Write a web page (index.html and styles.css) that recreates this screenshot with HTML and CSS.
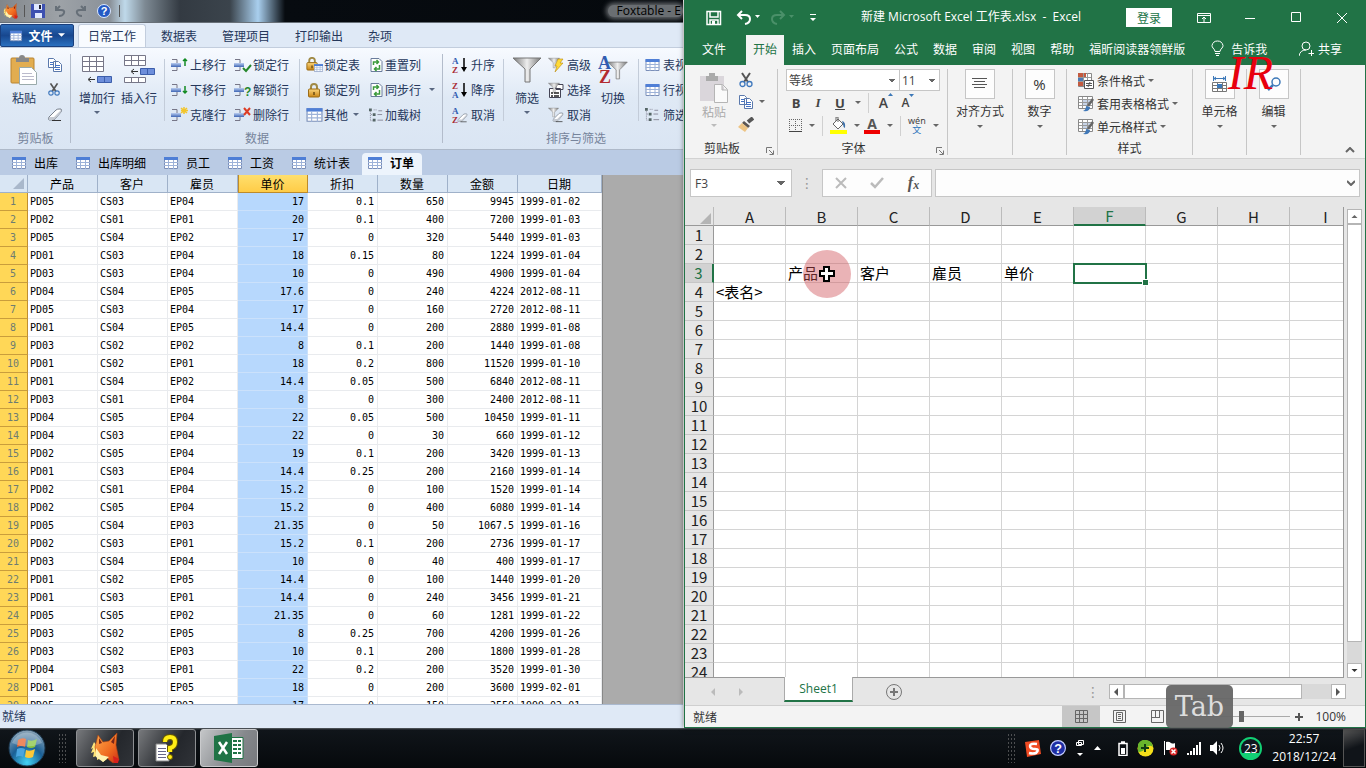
FILE: index.html
```html
<!DOCTYPE html>
<html lang="zh-CN">
<head>
<meta charset="utf-8">
<title>Foxtable 与 Excel</title>
<link rel="stylesheet" href="styles.css">
</head>
<body>
<svg class="defs" aria-hidden="true">
  <defs>
    <linearGradient id="blueBar" x1="0" y1="0" x2="0" y2="1"><stop offset="0" stop-color="#b9cdf0"/><stop offset="1" stop-color="#3f66b5"/></linearGradient>
    <linearGradient id="silver" x1="0" y1="0" x2="1" y2="0"><stop offset="0" stop-color="#777"/><stop offset=".5" stop-color="#eee"/><stop offset="1" stop-color="#777"/></linearGradient>
    <linearGradient id="gold" x1="0" y1="0" x2="0" y2="1"><stop offset="0" stop-color="#fbd57c"/><stop offset="1" stop-color="#c98413"/></linearGradient>
    <linearGradient id="foxFill" x1="0" y1="0" x2="1" y2="1"><stop offset="0" stop-color="#ffae4d"/><stop offset=".6" stop-color="#ef6a20"/><stop offset="1" stop-color="#c92d14"/></linearGradient>
    <radialGradient id="orb" cx=".5" cy=".9" r=".9"><stop offset="0" stop-color="#43d3f5"/><stop offset=".5" stop-color="#1a5f95"/><stop offset="1" stop-color="#8fa6b8"/></radialGradient>
  </defs>
  <symbol id="table" viewBox="0 0 14 14"><path fill="#fff" stroke="#7b8fb8" d="M.5 1.500h13v11H.5z"/><path fill="#4f7fd6" d="M0 1h14v3H0z"/><path stroke="#9db2d8" d="M0 6.500h14M0 9.500h14M4.500 4v9M9.500 4v9"/></symbol>
  <symbol id="row" viewBox="0 0 18 16"><path fill="none" stroke="#778" d="M1 2.500h5V6M1 13.500h5V10"/><path fill="url(#blueBar)" d="M0 6h10v4H0z"/></symbol>
  <symbol id="az" viewBox="0 0 16 16"><text x="0" y="7" class="az-a">A</text><text x="0" y="16" class="az-z">Z</text></symbol>
  <symbol id="za" viewBox="0 0 16 16"><text x="0" y="7" class="az-z">Z</text><text x="0" y="16" class="az-a">A</text></symbol>
  <symbol id="down" viewBox="0 0 6 16"><path stroke="#000" stroke-width="1.500" d="M3 1v12"/><path d="M0 10h6l-3 5z"/></symbol>
  <symbol id="funnel" viewBox="0 0 30 26"><path fill="url(#silver)" stroke="#777" d="M1 1h28L18 12v13h-5V12z"/></symbol>
  <symbol id="eraser" viewBox="0 0 16 14"><path fill="#fff" stroke="#77808c" d="M2 9l7-7q1-1 3-1h2q1 1 0 3l-6 7q-1 1-3 1H2q-1-1 0-3z"/><path fill="#c5cad2" d="M2 9h5l7-7v2l-6 7-3 1H2z"/><path stroke="#333" d="M5 12.500h9"/></symbol>
  <symbol id="lock" viewBox="0 0 16 16"><path fill="none" stroke="#a08a45" stroke-width="2" d="M4.500 8V5q0-3 3-3t3 3v3"/><rect x="2" y="7" width="11" height="8" rx="1" fill="url(#gold)" stroke="#9b6c17"/><path stroke="#6b4b12" stroke-width="1.500" d="M7.500 10v3"/></symbol>
  <symbol id="refresh" viewBox="0 0 14 16"><path fill="#fff" stroke="#6a7c9c" d="M1.500 1.500h8l3 3v10h-11z"/><path fill="none" stroke="#3b9a3b" stroke-width="1.500" d="M4 8V5h4M10 8v4H6M7 3l2 2-2 2M7 10l-2 2 2 2"/></symbol>
  <symbol id="tree" viewBox="0 0 16 16"><path fill="#566" d="M0 1h3v3H0zM4 6h3v3H4zM4 12h3v3H4z"/><path fill="none" stroke="#889" stroke-dasharray="1 1" d="M1.500 4v10H4M2 7.500h2M5 2.500h4"/><path stroke="#889" d="M10 3.500h4M9 7.500h5M9 13.500h6"/></symbol>
  <symbol id="scissors" viewBox="0 0 16 16"><path stroke="#555" stroke-width="2" d="M4 1l6 9M12 1L6 10"/><circle cx="4.500" cy="12" r="2.500" fill="none" stroke="#3f78bd" stroke-width="1.300"/><circle cx="11.500" cy="12" r="2.500" fill="none" stroke="#3f78bd" stroke-width="1.300"/></symbol>
  <symbol id="copy" viewBox="0 0 16 14"><path fill="#fff" stroke="#5b79ac" d="M1.500.5h5l2 2v7h-7zM6.500 3.500h5l3 3v7h-8z"/><path stroke="#4472c4" d="M3 4.500h3M3 6.500h3M8 7.500h5M8 9.500h5M8 11.500h5"/></symbol>
  <symbol id="caret" viewBox="0 0 6 4"><path fill="currentColor" d="M0 0h6L3 3z"/></symbol>
  <symbol id="launch" viewBox="0 0 8 8"><path fill="none" stroke="#777" d="M.5 6V.5H6M3 3l4 4M7.500 3.500v4h-4"/></symbol>
  <symbol id="fox" viewBox="0 0 30 32"><path fill="#ffe67a" d="M4 10L1 17l2-1-2 5 3-1-1 5 4-1v4l4-2 2 4 4-3z"/><path fill="url(#foxFill)" stroke="#a93f13" stroke-width=".6" d="M8 3l5 7 6-1L27 1l-1 12 3 15-6 3q-4-3-6-5l-5 2-5-5-2-8z"/><path fill="#fff2b0" d="M6 16l5 7 8 2-6 5-7-5z"/><path fill="#7b2718" d="M9 6l3 5-3 1zM25 4l-4 6 3 2z"/><path fill="#d81f1c" d="M23 24l6 3-1 4h-4z"/></symbol>
  <symbol id="cellstyle" viewBox="0 0 16 16"><path fill="#fff" stroke="#888" d="M.5.5h14v12H.5z"/><path fill="#c7d4e8" d="M4 4h8v6H4z"/><path stroke="#999" d="M1 3.500h13M1 6.500h13M1 9.500h13M4.500 1v11M9.500 1v11"/><path stroke="#666" stroke-width="2.500" d="M15 3l-5 7"/><path fill="#4078b8" d="M5 15q3-1 3-5l4 1q0 5-7 4z"/></symbol>
</svg>

<div class="desktop">
<main class="windows">
  <section class="fox" aria-label="Foxtable">
    <header class="fox-title">
      <svg width="15" height="16"><use href="#fox"/></svg><i class="tick"></i>
      <svg width="14" height="14" viewBox="0 0 14 14"><path fill="#3d50b0" d="M0 0h14v14H0z"/><path fill="#dfe8ff" d="M3 0h8v6H3zM4 9h7v5H4z"/><path fill="#223" d="M8 1h2v4H8z"/></svg>
      <svg class="dim" width="12" height="12" viewBox="0 0 12 12"><path fill="none" stroke="#666f78" stroke-width="2" d="M2 1v4h5q4 0 3 3t-5 3M2 5l4-4"/></svg>
      <svg class="dim" width="12" height="12" viewBox="0 0 12 12"><path fill="none" stroke="#666f78" stroke-width="2" d="M10 1v4H5q-4 0-3 3t5 3M10 5L6 1"/></svg>
      <svg class="help" width="14" height="14" viewBox="0 0 14 14"><circle cx="7" cy="7" r="6.500" fill="#2459c4" stroke="#dce8ff"/><text x="7" y="11" text-anchor="middle" class="q">?</text></svg><i class="tick last"></i>
      <span class="fox-name">Foxtable - E</span>
    </header>
    <nav class="fox-tabs">
      <button class="file"><svg width="14" height="12"><use href="#table"/></svg>文件<svg width="7" height="5"><use href="#caret"/></svg></button>
      <button class="active">日常工作</button><button>数据表</button><button>管理项目</button><button>打印输出</button><button>杂项</button>
    </nav>
    <div class="fox-ribbon">
      <div class="fgroup g-clip">
        <div class="fbody">
          <button class="big"><svg width="28" height="30" viewBox="0 0 28 30"><rect x="1" y="3" width="23" height="25" rx="1" fill="#e2ad50" stroke="#b98431"/><path fill="#888" d="M6 3h3q0-3 3-3t3 3h4v4H6z"/><path fill="#fff" stroke="#9aa" d="M9.500 12.500h12l5 5v12h-17z"/><path stroke="#bbc" d="M12 18.500h10M12 21.500h12M12 24.500h12"/></svg>粘贴</button>
          <div class="stack icons"><button aria-label="复制"><svg width="16" height="14"><use href="#copy"/></svg></button><button aria-label="剪切"><svg width="14" height="15"><use href="#scissors"/></svg></button><button aria-label="清除"><svg width="16" height="14"><use href="#eraser"/></svg></button></div>
        </div>
        <div class="flabel">剪贴板</div>
      </div>
      <div class="fgroup g-data">
        <div class="fbody">
          <button class="big"><svg width="32" height="30" viewBox="0 0 32 30"><path fill="#fff" stroke="#778" d="M1.500 1.500h21v15h-21zM1 6.500h21M1 11.500h21M8.500 1v15M15.500 1v15"/><path fill="#6d8edb" stroke="#3c5eab" d="M16.500 21.500h14v6h-14zM23.500 21v7"/><path fill="none" stroke="#333" d="M14 24.500H8M10 22l-3 2.500 3 2.500"/></svg>增加行<svg width="6" height="4"><use href="#caret"/></svg></button>
          <button class="big"><svg width="32" height="30" viewBox="0 0 32 30"><path fill="#fff" stroke="#778" d="M1.500.5h21v10h-21zM1 5.500h21M8.500 0v10M15.500 0v10M1.500 22.500h21v5h-21zM8.500 22v6M15.500 22v6"/><path fill="#6d8edb" stroke="#3c5eab" d="M17.500 13.500h14v6h-14zM24.500 13v7"/><path fill="none" stroke="#333" d="M15 16.500H9M11 14l-3 2.500 3 2.500"/></svg>插入行</button>
          <i class="sep"></i>
          <div class="stack">
            <button><svg width="18" height="16" viewBox="0 0 18 16"><use href="#row" width="18" height="16"/><path fill="none" stroke="#128b22" stroke-width="1.500" d="M14 9V2M12 4l2-2 2 2"/></svg>上移行</button>
            <button><svg width="18" height="16" viewBox="0 0 18 16"><use href="#row" width="18" height="16"/><path fill="none" stroke="#128b22" stroke-width="1.500" d="M14 4v7M12 9l2 2 2-2"/></svg>下移行</button>
            <button><svg width="18" height="16" viewBox="0 0 18 16"><use href="#row" width="18" height="16"/><path stroke="#f2c52b" stroke-width="1.500" d="M13 0v7M10 3.500h7M10 1l6 5M16 1l-6 5"/></svg>克隆行</button>
          </div>
          <div class="stack">
            <button><svg width="18" height="16" viewBox="0 0 18 16"><use href="#row" width="18" height="16"/><path fill="none" stroke="#25872c" stroke-width="2" d="M9 11l3 3 5-6"/></svg>锁定行</button>
            <button><svg width="18" height="16" viewBox="0 0 18 16"><use href="#row" width="18" height="16"/><text x="10" y="14" class="unlock">?</text></svg>解锁行</button>
            <button><svg width="18" height="16" viewBox="0 0 18 16"><use href="#row" width="18" height="16"/><path stroke="#dc3b23" stroke-width="2" d="M10 1l6 7M16 1l-6 7"/></svg>删除行</button>
          </div>
          <i class="sep"></i>
          <div class="stack">
            <button><svg width="17" height="16" viewBox="0 0 17 16"><use href="#lock" x="-1" y="-1" width="15" height="15"/><use href="#table" x="8" y="6" width="9" height="10"/></svg>锁定表</button>
            <button><svg width="17" height="16"><use href="#lock"/></svg>锁定列</button>
            <button><svg width="17" height="16"><use href="#table"/></svg>其他<svg class="near" width="6" height="4"><use href="#caret"/></svg></button>
          </div>
          <div class="stack">
            <button><svg width="15" height="16"><use href="#refresh"/></svg>重置列</button>
            <button><svg width="15" height="16"><use href="#refresh"/></svg>同步行<svg class="far" width="6" height="4"><use href="#caret"/></svg></button>
            <button><svg width="15" height="16"><use href="#tree"/></svg>加载树</button>
          </div>
        </div>
        <div class="flabel">数据</div>
      </div>
      <div class="fgroup g-sort">
        <div class="fbody">
          <div class="stack s1">
            <button><svg width="16" height="16"><use href="#az" width="16" height="16"/><use href="#down" x="9" width="6" height="16"/></svg>升序</button>
            <button><svg width="16" height="16"><use href="#za" width="16" height="16"/><use href="#down" x="9" width="6" height="16"/></svg>降序</button>
            <button><svg width="16" height="16"><use href="#az" width="16" height="16"/><use href="#eraser" x="5" y="6" width="11" height="10"/></svg>取消</button>
          </div>
          <i class="sep"></i>
          <button class="big"><svg width="30" height="30"><use href="#funnel"/></svg>筛选<svg width="6" height="4"><use href="#caret"/></svg></button>
          <div class="stack s2">
            <button><svg width="16" height="16"><use href="#funnel" width="12" height="12"/><path fill="#ffda38" stroke="#b98a10" stroke-width=".6" d="M10 2h5l-3 4h3l-8 9 2-6H7z"/></svg>高级</button>
            <button><svg width="16" height="16"><path fill="#fff" stroke="#445" d="M1.500 6.500h11v9h-11zM8 2.500h7v5H8z"/><use href="#funnel" width="12" height="12"/><path stroke="#222" stroke-width="1.500" d="M3 11h2M6 11h5M3 14h2M6 14h5"/></svg>选择</button>
            <button><svg width="16" height="16"><use href="#funnel" width="11" height="11"/><use href="#eraser" x="4" y="5" width="12" height="11"/></svg>取消</button>
          </div>
          <button class="big"><svg width="30" height="30"><use href="#funnel" x="9" y="4" width="21" height="23"/><text x="0" y="14" class="big-a">A</text><text x="1" y="28" class="big-z">Z</text></svg>切换</button>
          <i class="sep"></i>
          <div class="stack s2">
            <button><svg width="15" height="14"><use href="#table"/></svg>表视图</button>
            <button><svg width="15" height="14"><use href="#table"/></svg>行视图</button>
            <button><svg width="15" height="15"><use href="#tree"/></svg>筛选树</button>
          </div>
        </div>
        <div class="flabel">排序与筛选</div>
      </div>
    </div>
    <nav class="sheet-bar">
      <button><svg width="14" height="14"><use href="#table"/></svg>出库</button>
      <button><svg width="14" height="14"><use href="#table"/></svg>出库明细</button>
      <button><svg width="14" height="14"><use href="#table"/></svg>员工</button>
      <button><svg width="14" height="14"><use href="#table"/></svg>工资</button>
      <button><svg width="14" height="14"><use href="#table"/></svg>统计表</button>
      <button class="active"><svg width="14" height="14"><use href="#table"/></svg>订单</button>
    </nav>
    <div class="fox-data">
      <table class="orders">
        <thead><tr><th class="corner"><svg width="11" height="11" viewBox="0 0 11 11"><path fill="#a9b8cb" d="M11 0v11H0z"/></svg></th><th>产品</th><th>客户</th><th>雇员</th><th class="picked">单价</th><th>折扣</th><th>数量</th><th>金额</th><th class="date">日期</th></tr></thead>
        <tbody id="orders"></tbody>
      </table>
    </div>
    <footer class="fox-status">就绪</footer>
  </section>

  <section class="excel" aria-label="Excel">
    <header class="x-title">
      <button class="q-save" aria-label="保存"><svg width="16" height="16" viewBox="0 0 16 16"><path fill="none" stroke="#fff" stroke-width="1.500" d="M1 1.500h13.500v13H1zM4 2v5h8V2M4 14v-4h8v4"/><path fill="#fff" d="M6 11h3v3H6z"/></svg></button>
      <button class="q-undo" aria-label="撤消"><svg width="25" height="15" viewBox="0 0 25 15"><path fill="none" stroke="#fff" stroke-width="2" d="M6 1L2 5l4 4M2 5h7q5 0 5 4t-5 5"/><path fill="#fff" d="M19 5h5l-2.500 3z"/></svg></button>
      <button class="q-redo" aria-label="恢复"><svg width="25" height="15" viewBox="0 0 25 15"><path fill="none" stroke="#4a9069" stroke-width="2" d="M10 1l4 4-4 4M14 5H7q-5 0-5 4t5 5"/><path fill="#4a9069" d="M19 5h5l-2.500 3z"/></svg></button>
      <button aria-label="自定义"><svg width="6" height="8" viewBox="0 0 6 8"><path fill="#fff" d="M0 0h6v1H0zM0 4h6L3 7z"/></svg></button>
      <h1>新建 Microsoft Excel 工作表.xlsx&nbsp; - &nbsp;Excel</h1>
      <button class="login">登录</button>
      <div class="win-buttons">
        <button aria-label="功能区显示选项"><svg width="14" height="12" viewBox="0 0 14 12"><path fill="none" stroke="#fff" d="M.5 1.500h13v9H.5zM0 3.500h14M7 10V5M5 7l2-2 2 2"/></svg></button>
        <button aria-label="最小化"><svg width="12" height="12"><path stroke="#fff" d="M1 6.500h10"/></svg></button>
        <button aria-label="最大化"><svg width="11" height="11"><path fill="none" stroke="#fff" d="M.5.5h9v9h-9z"/></svg></button>
        <button aria-label="关闭"><svg width="12" height="12"><path stroke="#fff" d="M1 1l10 10M11 1L1 11"/></svg></button>
      </div>
    </header>
    <nav class="x-tabs">
      <button class="first">文件</button><button class="active">开始</button><button>插入</button><button>页面布局</button><button>公式</button><button>数据</button><button>审阅</button><button>视图</button><button>帮助</button><button>福昕阅读器领鲜版</button>
      <button class="tell"><svg width="13" height="17" viewBox="0 0 13 17"><path fill="none" stroke="#fff" d="M4 11.500Q4 10 2 8 1 7 1 5.500 2 1 6.500 1T12 5.500Q12 7 11 8 9 10 9 11.500zM4 13.500h5M5 15.500h3"/></svg>告诉我</button>
      <button class="share"><svg width="15" height="16" viewBox="0 0 15 16"><circle cx="7" cy="5" r="4" fill="none" stroke="#fff"/><path fill="none" stroke="#fff" d="M0 15q1-6 7-6M12.500 9v6M9.500 12.500h6"/></svg>共享</button>
    </nav>
    <div class="x-ribbon">
      <div class="xg x-clip">
        <div class="xbody">
          <button class="xpaste"><svg width="28" height="32" viewBox="0 0 28 32"><path fill="#dad6db" d="M0 4h24v25H0z"/><path fill="#aaa" d="M6 4h3V1h6v3h3v5H6z"/><path fill="#fafafa" stroke="#b5b5b5" d="M14.500 12.500h8l5 5v13h-13zM22 13v5h5"/></svg>粘贴<svg width="6" height="4"><use href="#caret"/></svg></button>
          <div class="xcol">
            <button aria-label="剪切"><svg width="16" height="16"><use href="#scissors"/></svg></button>
            <button aria-label="复制"><svg width="16" height="14"><use href="#copy"/></svg><svg width="6" height="4"><use href="#caret"/></svg></button>
            <button aria-label="格式刷"><svg width="16" height="15" viewBox="0 0 16 15"><path stroke="#555" stroke-width="4" d="M15 1l-5 4"/><path fill="#5b5653" d="M6 4l6 5-2 2-6-5z"/><path fill="#edc484" d="M4 6l6 5-3 4-7-5z"/></svg></button>
          </div>
        </div>
        <div class="xlabel">剪贴板<button aria-label="剪贴板选项"><svg width="8" height="8"><use href="#launch"/></svg></button></div>
      </div>
      <div class="xg x-font">
        <div class="xbody rows">
          <div class="combo"><select class="fam" aria-label="字体"><option>等线</option></select><select class="size" aria-label="字号"><option>11</option></select></div>
          <div class="fr r1"><button><b>B</b></button><button><i>I</i></button><button><u>U</u></button><button aria-label="下划线选项"><svg width="6" height="4"><use href="#caret"/></svg></button><i class="vs"></i><button class="grow">A<svg width="5" height="4" viewBox="0 0 5 4"><path fill="#3c78b8" d="M0 3h5L2.500 0z"/></svg></button><button class="shrink">A<svg width="5" height="4" viewBox="0 0 5 4"><path fill="#3c78b8" d="M0 0h5L2.500 3z"/></svg></button></div>
          <div class="fr r2"><button aria-label="边框"><svg width="13" height="13" viewBox="0 0 13 13"><path fill="none" stroke="#666" stroke-dasharray="1 1" d="M0 .5h13M0 6.500h13M.5 0v13M6.500 0v13M12.500 0v13"/><path stroke="#444" d="M0 12.500h13"/></svg><svg width="6" height="4"><use href="#caret"/></svg></button><i class="vs"></i><button aria-label="填充颜色"><svg width="17" height="17" viewBox="0 0 17 17"><path fill="#fff" stroke="#666" d="M3 7l5-5 5 5-5 5zM6 4V0h2v5"/><path fill="#3c70aa" d="M12 4q4 1 3 7-2-1-2-4z"/><path fill="#ffff00" d="M0 13h17v4H0z"/></svg><svg width="6" height="4"><use href="#caret"/></svg></button><button aria-label="字体颜色"><svg width="16" height="17" viewBox="0 0 16 17"><text x="8" y="12" text-anchor="middle" class="fa">A</text><path fill="#e00" d="M0 13h16v4H0z"/></svg><svg width="6" height="4"><use href="#caret"/></svg></button><i class="vs"></i><button class="wen"><span>wén<em>文</em></span><svg width="6" height="4"><use href="#caret"/></svg></button></div>
        </div>
        <div class="xlabel">字体<button aria-label="字体选项"><svg width="8" height="8"><use href="#launch"/></svg></button></div>
      </div>
      <button class="xg tall w65"><span class="tile"><svg width="16" height="14"><path stroke="#555" d="M0 1.500h15M2 4.500h11M0 7.500h15M2 10.500h11"/></svg></span>对齐方式<svg width="6" height="4"><use href="#caret"/></svg></button>
      <button class="xg tall w54"><span class="tile pct">%</span>数字<svg width="6" height="4"><use href="#caret"/></svg></button>
      <div class="xg x-styles">
        <div class="xbody rows">
          <button><svg width="16" height="16" viewBox="0 0 16 16"><path fill="#fff" stroke="#888" d="M.5.5h13v13H.5z"/><path fill="#c35a40" d="M0 0h8v4H0zM0 9h5v4H0z"/><path fill="#4d78b5" d="M0 4h6v4H0z"/><path stroke="#999" d="M0 4.500h13M0 8.500h13M5.500 0v13M9.500 0v8"/><path fill="#fff" stroke="#555" d="M6.500 7.500h9v8h-9zM8 10.500h6M8 12.500h6M12 9l-2 5"/></svg>条件格式<svg width="6" height="4"><use href="#caret"/></svg></button>
          <button><svg width="16" height="16"><use href="#cellstyle"/></svg>套用表格格式<svg width="6" height="4"><use href="#caret"/></svg></button>
          <button><svg width="16" height="16"><use href="#cellstyle"/></svg>单元格样式<svg width="6" height="4"><use href="#caret"/></svg></button>
        </div>
        <div class="xlabel">样式</div>
      </div>
      <button class="xg tall w54"><span class="tile"><svg width="16" height="17" viewBox="0 0 16 17"><path fill="none" stroke="#3c78b8" d="M1.500 0v5M13.500 0v5M2 2.500h11M4 1L2 2.500 4 4M11 1l2 1.500L11 4"/><path fill="#fff" stroke="#777" d="M.5 6.500h14v9H.5zM0 9.500h15M0 12.500h15M5.500 6v10M10.500 6v10"/><path fill="#3c78b8" d="M5 8h5v4H5z"/></svg></span>单元格<svg width="6" height="4"><use href="#caret"/></svg></button>
      <button class="xg tall w54"><span class="tile"><svg width="16" height="16" viewBox="0 0 16 16"><circle cx="10" cy="6" r="4" fill="none" stroke="#3c78b8" stroke-width="1.500"/><path stroke="#3c78b8" stroke-width="2.500" d="M7 9l-5 5"/></svg></span>编辑<svg width="6" height="4"><use href="#caret"/></svg></button>
      <button class="collapse" aria-label="折叠功能区"><svg width="10" height="6" viewBox="0 0 10 6"><path fill="none" stroke="#666" stroke-width="2" d="M1 5l4-4 4 4"/></svg></button>
      <div class="watermark">IR</div>
    </div>
    <div class="x-formula">
      <select class="namebox" aria-label="名称框"><option>F3</option></select>
      <span class="dots">⋮</span>
      <div class="fx"><button aria-label="取消"><svg width="12" height="12"><path stroke="#bbb" stroke-width="2" d="M1 1l10 10M11 1L1 11"/></svg></button><button aria-label="输入"><svg width="14" height="12"><path fill="none" stroke="#bbb" stroke-width="2.500" d="M1 6l4 4 8-9"/></svg></button><button class="f">f<small>x</small></button></div>
      <div class="formula"><input type="text" aria-label="编辑栏"><svg width="8" height="6" viewBox="0 0 8 6"><path fill="none" stroke="#666" stroke-width="2" d="M0 1l4 4 4-4"/></svg></div>
    </div>
    <div class="x-main">
      <div class="x-grid">
        <table class="cells">
          <thead><tr><th class="rh"><svg width="11" height="11" viewBox="0 0 11 11"><path fill="#b4b4b4" d="M11 0v11H0z"/></svg></th><th>A</th><th>B</th><th>C</th><th>D</th><th>E</th><th class="picked">F</th><th>G</th><th>H</th><th>I</th></tr></thead>
          <tbody id="cells"></tbody>
        </table>
      </div>
      <div class="vscroll"><button aria-label="向上"><svg width="7" height="4" viewBox="0 0 6 4"><path fill="#666" d="M0 3h6L3 0z"/></svg></button><span class="thumb"></span><span class="rest"></span><button aria-label="向下"><svg width="7" height="4"><use href="#caret"/></svg></button></div>
    </div>
    <div class="x-sheets">
      <button class="nav" aria-label="上一个"><svg width="5" height="8"><path fill="#bbb" d="M4 0v8L0 4z"/></svg></button><button class="nav" aria-label="下一个"><svg width="5" height="8"><path fill="#bbb" d="M0 0v8l4-4z"/></svg></button>
      <button class="sheet">Sheet1</button>
      <button class="add" aria-label="新工作表"><svg width="16" height="16"><circle cx="8" cy="8" r="7.500" fill="none" stroke="#777"/><path stroke="#777" stroke-width="2" d="M8 4v8M4 8h8"/></svg></button>
      <span class="dots">⋮</span>
      <div class="hscroll"><button aria-label="向左"><svg width="5" height="8"><path fill="#555" d="M4 0v8L0 4z"/></svg></button><span class="thumb"></span><span class="rest"></span><button aria-label="向右"><svg width="5" height="8"><path fill="#555" d="M0 0v8l4-4z"/></svg></button></div>
    </div>
    <footer class="x-status">
      <span class="ready">就绪</span>
      <button class="on" aria-label="普通"><svg width="13" height="13"><path fill="none" stroke="#666" d="M.5.5h12v12H.5zM0 4.500h13M0 8.500h13M4.500 0v13M8.500 0v13"/></svg></button>
      <button aria-label="页面布局"><svg width="13" height="13"><path fill="none" stroke="#666" d="M.5.5h12v12H.5zM3.500 2.500h6v8h-6zM5 4.500h3M5 6.500h3M5 8.500h3"/></svg></button>
      <button aria-label="分页预览"><svg width="13" height="13"><path fill="none" stroke="#666" d="M.5.5h12v12H.5zM4.500 0v7M8.500 0v7M0 7.500h9"/></svg></button>
      <input class="zoom" type="range" min="0" max="100" value="50" aria-label="缩放"><button class="plus" aria-label="放大"><svg width="8" height="8"><path stroke="#555" stroke-width="2" d="M4 0v8M0 4h8"/></svg></button><span class="pc">100%</span>
    </footer>
  </section>
  <div class="pointer"><svg width="16" height="16" viewBox="0 0 16 16"><path fill="#fff" stroke="#000" stroke-width="2" d="M5 1h5v4h5v5h-5v5H5v-5H1V5h4z"/></svg></div>
  <div class="keycap">Tab</div>
</main>

<footer class="taskbar">
  <button class="start" aria-label="开始"><svg width="38" height="38" viewBox="0 0 38 38"><circle cx="19" cy="19" r="18" fill="url(#orb)" stroke="#1d3950"/><path fill="#e9632b" d="M10 11q4-3 8-1l-1 8q-4-2-8 0z"/><path fill="#87c442" d="M20 11q4 2 9-1l-2 8q-4 2-8 0z"/><path fill="#4aa5df" d="M9 20q4-2 8 0l-2 8q-3-2-7 0z"/><path fill="#fbc838" d="M18 21q4 2 9-1l-2 8q-4 2-8 0z"/><path fill="#fff" opacity=".25" d="M4 14a16 16 0 0130 0q-15 7-30 0z"/></svg></button>
  <i class="grip"></i>
  <button class="app" aria-label="Foxtable"><svg width="30" height="32"><use href="#fox"/></svg></button>
  <button class="app" aria-label="帮助"><svg width="24" height="28" viewBox="0 0 24 28"><path fill="#fff" stroke="#888" d="M1 10h10l3 3v14H1z"/><path stroke="#668" d="M3 14.500h8M3 17.500h8M3 20.500h8M3 23.500h8"/><path fill="none" stroke="#665800" stroke-width="6" d="M10 8q0-5 5-5t5 5-5 6v4"/><path fill="none" stroke="#ffed15" stroke-width="4" d="M10 8q0-5 5-5t5 5-5 6v4"/><circle cx="15" cy="23" r="2.500" fill="#ffed15" stroke="#665800"/></svg></button>
  <button class="app lit" aria-label="Excel"><svg width="30" height="30" viewBox="0 0 30 30"><path fill="#fff" stroke="#1f7345" d="M15 4.500h14v21H15z"/><path stroke="#1f7345" stroke-width="2" d="M19 8h4M24 8h3M19 12h4M24 12h3M19 16h4M24 16h3M19 20h4M24 20h3"/><path fill="#1f7345" d="M0 3l18-3v30L0 27z"/><path stroke="#fff" stroke-width="2.500" d="M5 9l8 12M13 9L5 21"/></svg></button>
  <div class="tray">
    <i class="grip"></i>
    <svg width="17" height="17" viewBox="0 0 17 17"><path fill="#f04b23" d="M1 2l14-2 2 14-14 3z"/><path fill="none" stroke="#fff" stroke-width="2.500" d="M13 4q-7-1-7 2t5 3 1 4q-3 1-7 0"/></svg>
    <svg width="16" height="16" viewBox="0 0 14 14"><circle cx="7" cy="7" r="6.500" fill="#1e2ea4" stroke="#c5ceff"/><text x="7" y="11" text-anchor="middle" class="q">?</text></svg>
    <svg width="10" height="18" viewBox="0 0 10 18"><path fill="none" stroke="#fff" d="M3.500 1.500h5v4h-5zM1.500 3.500h5v3h-5z"/><path fill="#fff" d="M2 14h6l-3 3z"/></svg>
    <svg width="8" height="5"><path fill="#fff" d="M0 4h7L3.500 0z"/></svg>
    <svg class="wide" width="10" height="15" viewBox="0 0 10 15"><path fill="none" stroke="#fff" stroke-width="1.500" d="M1 2.500h8v12H1zM3 1h4"/><path fill="#fff" d="M3 7h4v6H3z"/></svg>
    <svg width="17" height="17"><circle cx="8.500" cy="8.500" r="8" fill="#f5df1a"/><path fill="#69b52c" d="M1 4a8 8 0 0115 3q-4-3-7 1T1 12z"/><path stroke="#143b12" stroke-width="2" d="M8 4v8M4 8h8"/></svg>
    <svg width="15" height="16" viewBox="0 0 15 16"><path fill="#fff" d="M1 1h1v14H1zM3 2q3-1 5 1 2 1 4 0v7H3z"/><circle cx="10.500" cy="11.500" r="4" fill="#d92525"/><path stroke="#fff" stroke-width="1.500" d="M8.500 9.500l4 4M12.500 9.500l-4 4"/></svg>
    <svg width="14" height="13"><path fill="#fff" d="M0 11h2v2H0zM3 9h2v4H3zM6 6h2v7H6zM9 3h2v10H9zM12 0h2v13h-2z"/></svg>
    <svg width="15" height="14" viewBox="0 0 15 14"><path fill="#fff" d="M0 4h3l4-4v14l-4-4H0z"/><path fill="none" stroke="#fff" d="M9 4q2 3 0 6M11 2q4 5 0 10"/></svg>
    <span class="badge">23</span>
    <time>22:57<br>2018/12/24</time>
    <button class="peek" aria-label="显示桌面"></button>
  </div>
</footer>
</div>
<script src="script.js"></script>
</body>
</html>
```
FILE: styles.css
```css
* { box-sizing: border-box; }
body { margin: 0; font: 12px/16px "Noto Sans CJK SC", sans-serif; color: #000; }
button, input, select { font: inherit; color: inherit; background: none; border: 0; padding: 0; margin: 0; border-radius: 0; }
button { display: flex; align-items: center; justify-content: center; white-space: nowrap; }
svg { display: block; flex: none; }
.defs { position: absolute; width: 0; height: 0; }
.desktop { height: 100vh; display: flex; flex-direction: column; overflow: hidden; }
.windows { flex: 1; min-height: 0; display: flex; position: relative; }

/* Foxtable */
.fox { flex: none; width: 50%; display: flex; flex-direction: column; overflow: hidden; background: #dde8f5; }
.fox-title { flex: none; height: 23px; display: flex; align-items: center; gap: 6px; padding: 0 0 0 3px; border-bottom: 1px solid #687078; background: linear-gradient(90deg, #81868b 0, #9da2a7 60px, #8a9199 110px, #bfd9ea 125px, #7d8993 145px, #333a42 180px, #3b444c 230px, #a9cfee 258px, #070b10 285px, #05090d 100%); }
.fox-title .tick { width: 1px; height: 12px; background: #555; }
.fox-title .last { margin-left: 2px; }
.fox-title .dim { margin-left: 3px; }
.fox-title .help { margin-left: 4px; }
.fox-name { margin-left: auto; padding: 0 2px 0 8px; font: 12px/12px "Open Sans", sans-serif; white-space: nowrap; color: #000; background: #6a6e72; box-shadow: 0 0 5px 2px #6a6e72; border-radius: 6px; }
.fox-tabs { flex: none; height: 25px; display: flex; gap: 5px; background: #dfe9f6; color: #25375b; border-bottom: 1px solid #c2cddd; padding-top: 1px; }
.fox-tabs button { padding: 0 10px; }
.fox-tabs .active { background: #f8fbff; border: 1px solid #c2cddd; border-bottom: 0; border-radius: 3px 3px 0 0; padding: 0 9px; margin-left: -1px; }
.fox-tabs .file { width: 74px; padding: 0; gap: 5px; color: #fff; font-weight: bold; background: linear-gradient(#2b69b6, #17478f 50%, #2a70bf); border: 1px solid #193e7c; border-radius: 2px; }
.fox-ribbon { flex: none; height: 102px; display: flex; background: linear-gradient(#f7faff, #dfe9f5 50%, #dae5f3); border-bottom: 1px solid #aeb9c9; color: #25375b; }
.fgroup { flex: none; padding-top: 4px; position: relative; }
.fgroup::after { content: ""; position: absolute; right: 0; top: 6px; bottom: 6px; width: 1px; background: #b3bccb; }
.fbody { display: flex; height: 76px; }
.flabel { text-align: center; color: #76849b; line-height: 20px; }
.g-clip { width: 71px; } .g-data { width: 372px; } .g-sort { width: 266px; }
.big { flex-direction: column; justify-content: flex-start; width: 42px; gap: 5px; padding-top: 3px; }
.g-clip .big { margin-left: 3px; }
.g-data .big:first-child { margin-left: 5px; }
.stack { display: flex; flex-direction: column; width: 63px; }
.stack button { height: 25px; gap: 1px; justify-content: flex-start; padding-left: 2px; }
.stack.icons { width: 20px; }
.sep { flex: none; width: 1px; height: 62px; margin: 7px 4px; background: #c3ccd9; }
.near { margin-left: 4px; }
.far { margin-left: 7px; }
.fox-ribbon svg { color: #596780; }
.g-sort .s1 { width: 56px; padding-left: 7px; }
.g-sort .s1 button, .g-sort .s2 button { gap: 3px; }
.g-sort .s1 + .sep + .big { width: 38px; }
.g-sort .s2 { width: 46px; }
.g-sort .s2:last-child { width: 60px; }
.az-a, .az-z { font: bold 9px "Liberation Serif", serif; fill: #315db1; }
.az-z { fill: #a92c35; }
.big-a, .big-z { font: bold 18px "Liberation Serif", serif; fill: #315db1; }
.big-z { fill: #b32b30; }
.q { font: bold 11px "Liberation Sans", sans-serif; fill: #fff; }
.unlock { font: bold 12px "Liberation Sans", sans-serif; fill: #25872c; }
.sheet-bar { flex: none; height: 25px; display: flex; background: #bacbe4; padding: 3px 0 0 6px; }
.sheet-bar button { gap: 8px; padding: 0 12px 3px 6px; }
.sheet-bar .active { background: #edf4fc; font-weight: bold; border-radius: 4px 4px 0 0; padding-right: 8px; }
.fox-data { flex: 1; min-height: 0; overflow: hidden; background: #ababab; }
.orders { border-spacing: 0; table-layout: fixed; width: 602px; border-right: 1px solid #888; background: #fff; }
.orders th, .orders td { height: 18px; padding: 0 3px 0 2px; line-height: 16px; overflow: hidden; white-space: nowrap; }
.orders thead th { font-weight: normal; line-height: 14px; background: #d9e6f4; border-right: 1px solid #9fb1c9; border-bottom: 1px solid #9fb1c9; width: 70px; }
.orders thead .corner { width: 28px; }
.corner svg { margin-left: auto; }
.orders thead .date { width: 84px; }
.orders thead .picked { background: linear-gradient(#ffdf6d, #ffcc47); border: 1px solid #bd8b2b; border-top: 0; }
.orders td { font: 10px/16px "DejaVu Sans Mono", "Liberation Mono", monospace; text-align: right; border-right: 1px solid #e9ebee; border-bottom: 1px solid #e9ebee; }
.orders td.l { text-align: left; }
.orders td.price { background: #b7d8fd; border-color: #cbe1fb; }
.orders tbody th { font: 10px/16px "DejaVu Sans Mono", "Liberation Mono", monospace; color: #6d7c72; background: #ffd757; border-right: 1px solid #c08e31; border-bottom: 1px solid #c99d3c; text-align: center; }
.fox-status { flex: none; height: 24px; padding: 3px 2px; background: #dfe9f6; border-top: 1px solid #aab9cf; color: #25375b; }

/* Excel */
.excel { flex: 1; min-width: 0; margin-left: 1px; display: flex; flex-direction: column; overflow: hidden; border: 1px solid #217346; border-top: 0; background: #e6e6e6; color: #333; box-shadow: 0 0 5px #0008; position: relative; }
.x-title { flex: none; height: 35px; background: #217346; color: #fff; display: flex; align-items: center; padding-left: 21px; }
.q-save { margin-right: 14px; } .q-undo { margin-right: 9px; } .q-redo { margin-right: 15px; }
.x-title h1 { font: 12px/18px "Open Sans", "Noto Sans CJK SC", sans-serif; margin: 0; padding-bottom: 2px; flex: 1; text-align: center; white-space: nowrap; }
.login { background: #fff; color: #217346; width: 46px; height: 19px; }
.win-buttons { display: flex; }
.win-buttons button { width: 46px; }
.win-buttons button:first-child { margin-left: 9px; }
.x-tabs { flex: none; height: 30px; background: #217346; color: #fff; display: flex; gap: 1px; }
.x-tabs button { padding: 0 7px 3px; }
.x-tabs .first { padding: 0 19px 3px 17px; }
.x-tabs .active { background: #f3f3f3; color: #217346; }
.x-tabs .tell { margin-left: 11px; gap: 7px; padding-right: 0; }
.x-tabs .share { margin-left: auto; margin-right: 16px; gap: 4px; }
.x-ribbon { flex: none; height: 94px; display: flex; background: #f3f3f3; border-bottom: 1px solid #d2d2d2; padding-top: 4px; position: relative; }
.x-ribbon svg { color: #666; }
.xg { flex: none; height: 86px; border-right: 1px solid #c6c6c6; }
.xbody { height: 69px; display: flex; }
.xbody.rows { flex-direction: column; }
.xlabel { position: relative; text-align: center; line-height: 20px; height: 17px; color: #333; }
.xlabel button { position: absolute; right: 3px; bottom: 0; }
.x-clip { width: 93px; } .x-clip .xlabel { padding-right: 18px; }
.xpaste { width: 58px; flex-direction: column; justify-content: flex-start; color: #aaa; gap: 0; padding-top: 3px; }
.x-ribbon .xpaste > svg { color: #bbb; }
.x-ribbon .xpaste > svg:last-child { margin-top: 4px; }
.xcol { width: 34px; }
.xcol button { height: 22px; justify-content: flex-start; gap: 5px; margin-left: -5px; }
.x-font { width: 170px; } .x-font .xlabel { padding-right: 18px; }
.combo { height: 22px; flex: none; display: flex; margin-left: 8px; }
.combo select, .namebox { appearance: none; border: 1px solid #c6c6c6; color: #444; background-color: #fff; background-repeat: no-repeat; background-image: linear-gradient(to bottom right, #666 50%, #fff 51%), linear-gradient(to bottom left, #666 50%, #fff 51%); background-size: 3px 3px; background-position: right 4px center, right 7px center; }
.combo select { padding: 0 2px; }
.combo .fam { width: 114px; }
.combo .size { width: 40px; border-left: 0; font: 12px "Open Sans", sans-serif; }
.fr { display: flex; align-items: center; height: 23px; padding-left: 7px; color: #444; }
.r1 button { width: 22px; font: 13px "Open Sans", sans-serif; }
.r1 button:nth-child(4) { width: 13px; }
.r1 button i { font-family: "Liberation Serif", serif; font-weight: bold; }
.r1 button u { font-weight: bold; }
.r1 .grow { margin-left: 2px; font-size: 14px; font-weight: 600; align-items: flex-start; }
.r1 .shrink { font-size: 12px; font-weight: 600; align-items: flex-start; }
.vs { width: 1px; height: 20px; background: #d0d0d0; margin: 0 4px; }
.r2 button { gap: 7px; padding-left: 4px; }
.r2 .vs { margin: 0 3px 0 7px; }
.fa { font: bold 14px "Open Sans", sans-serif; fill: #555; }
.wen span { display: flex; flex-direction: column; align-items: center; font: 9px/8px "Noto Sans", sans-serif; }
.wen em { font: normal 9px/9px "Noto Sans CJK SC", sans-serif; color: #2b74bb; }
.tall { flex-direction: column; justify-content: flex-start; gap: 4px; }
.tall svg:last-child { margin-top: 2px; }
.tile { display: flex; align-items: center; justify-content: center; width: 30px; height: 30px; background: #fdfdfd; border: 1px solid #c6c6c6; }
.tile svg:last-child { margin-top: 0; }
.pct { font: 15px "Open Sans", sans-serif; }
.w65 { width: 65px; } .w54 { width: 54px; }
.x-styles { width: 126px; }
.x-styles .rows button { height: 23px; gap: 3px; justify-content: flex-start; padding-left: 11px; }
.collapse { margin: auto 10px 5px auto; }
.watermark { position: absolute; right: 92px; top: -16px; font: italic 48px/48px "Liberation Serif", serif; color: #e8000d; z-index: 2; }
.x-formula { flex: none; height: 48px; display: flex; align-items: center; padding: 0 5px; }
.x-formula .namebox { width: 102px; height: 28px; padding: 0 4px; font: 12px "Open Sans", sans-serif; background-size: 4px 4px; background-position: right 6px center, right 10px center; }
.dots { width: 30px; text-align: center; color: #999; font: 14px "DejaVu Sans", sans-serif; }
.fx { width: 110px; height: 28px; display: flex; justify-content: space-around; background: #fdfdfd; border: 1px solid #c6c6c6; }
.fx .f { font: italic bold 16px "Liberation Serif", serif; color: #555; }
.fx small { font-size: 12px; padding-top: 4px; }
.formula { flex: 1; height: 28px; margin-left: 3px; display: flex; align-items: center; background: #fdfdfd; border: 1px solid #c6c6c6; padding-right: 4px; }
.formula input { flex: 1; min-width: 0; outline: 0; }
.x-main { flex: 1; min-height: 0; display: flex; }
.x-grid { flex: 1; min-width: 0; overflow: hidden; border-right: 1px solid #999; border-bottom: 1px solid #999; background: #fff; }
.cells { border-spacing: 0; table-layout: fixed; width: 677px; }
.cells th, .cells td { height: 19px; padding: 0 2px; line-height: 18px; white-space: nowrap; font-weight: normal; overflow: visible; }
.cells thead th { width: 72px; background: #e6e6e6; border-right: 1px solid #bbb; border-bottom: 1px solid #999; font: 15px/17px "Noto Sans CJK SC", sans-serif; color: #222; }
.cells thead .rh { width: 29px; }
.rh svg { margin: 4px 0 0 auto; }
.cells thead .picked { background: #d2d2d2; color: #217346; border-bottom: 2px solid #217346; }
.cells tbody th { background: #e6e6e6; border-right: 1px solid #999; border-bottom: 1px solid #c6c6c6; font: 15px/18px "Noto Sans CJK SC", sans-serif; color: #222; }
.cells tbody th.picked { background: #d2d2d2; color: #217346; border-right: 2px solid #217346; }
.cells td { border-right: 1px solid #d4d4d4; border-bottom: 1px solid #d4d4d4; font-size: 15px; color: #000; }
.cells td.cur { position: relative; outline: 2px solid #217346; outline-offset: -1px; }
.cells td.cur::after { content: ""; position: absolute; right: -3px; bottom: -3px; width: 5px; height: 5px; background: #217346; outline: 1px solid #fff; }
.vscroll { width: 21px; flex: none; display: flex; flex-direction: column; padding: 2px 3px 0; }
.vscroll button, .hscroll button { width: 15px; height: 15px; flex: none; background: #fff; border: 1px solid #b5b5b5; }
.vscroll .thumb { flex: 1; background: #fff; border: 1px solid #b5b5b5; }
.vscroll .rest { height: 21px; background: #d9d9d9; }
.x-sheets { flex: none; height: 27px; display: flex; align-items: center; padding: 0 19px 0 14px; }
.nav { width: 28px; }
.nav + .nav { margin-right: 29px; }
.sheet { width: 69px; height: 25px; align-self: flex-start; margin-top: -1px; background: #fff; color: #217346; font: 12px "Open Sans", sans-serif; border: 1px solid #aaa; border-top: 0; border-bottom: 2px solid #217346; position: relative; }
.add { margin-left: 33px; margin-right: auto; }
.x-sheets .dots { margin-right: 1px; }
.hscroll { width: 237px; display: flex; }
.hscroll .thumb { flex: 1; background: #fff; border: 1px solid #b5b5b5; }
.hscroll .rest { width: 29px; background: #d9d9d9; }
.x-status { flex: none; height: 22px; display: flex; border-top: 1px solid #cfcfcf; background: #f3f3f3; align-items: center; padding-right: 19px; }
.ready { margin: 0 auto 0 8px; }
.x-status button { width: 38px; height: 21px; }
.x-status .on { background: #c6c6c6; }
.zoom { appearance: none; width: 98px; height: 1px; background: #aaa; margin: 0 5px 0 16px; }
.zoom::-webkit-slider-thumb { appearance: none; width: 5px; height: 11px; background: #666; }
.x-status .plus { width: 8px; margin-right: 12px; }
.pc { font: 12px "Open Sans", sans-serif; }

/* overlays that float above the windows */
.pointer { position: absolute; left: 803px; top: 250px; width: 48px; height: 48px; border-radius: 50%; background: #cf515870; display: flex; align-items: center; justify-content: center; }
.keycap { position: absolute; right: 133px; bottom: 0; width: 67px; height: 43px; border-radius: 5px; background: #666666f2; color: #ddd; font: 27px/44px "DejaVu Serif", serif; text-align: center; }

/* taskbar */
.taskbar { flex: none; height: 40px; display: flex; align-items: center; background: linear-gradient(#5b6167 0, #10151a 2px, #06090c); color: #fff; padding-left: 8px; }
.grip { width: 8px; height: 30px; background: radial-gradient(#777 1px, transparent 1px) 0 0 / 3px 4px; opacity: .6; }
.start { margin-right: 12px; }
.app { width: 58px; height: 38px; border: 1px solid #8d8f92; border-radius: 3px; background: linear-gradient(120deg, #77797c, #24272c 60%, #303338); margin-left: 4px; }
.grip + .app { margin-left: 10px; }
.app.lit { background: linear-gradient(120deg, #c4c6c8, #85888c 60%, #77797d); border-color: #c9cacc; }
.tray { margin-left: auto; display: flex; align-items: center; gap: 9px; }
.tray .wide { margin-left: 7px; }
.badge { width: 23px; height: 23px; margin-left: 5px; border: 2px solid #12d074; border-radius: 50%; font: 12px/19px "Open Sans", sans-serif; text-align: center; background: linear-gradient(#101820 75%, #12d074 76%); }
time { font: 12px/18px "Open Sans", sans-serif; text-align: center; margin-left: 1px; }
.peek { width: 22px; height: 38px; margin-right: 1px; margin-left: -2px; border: 1px solid #555; background: linear-gradient(160deg, #555, #101419 50%); }
```
FILE: script.js
```js
const orders = `PD05 CS03 EP04 17 0.1 650 9945 1999-01-02
PD02 CS01 EP01 20 0.1 400 7200 1999-01-03
PD05 CS04 EP02 17 0 320 5440 1999-01-03
PD01 CS03 EP04 18 0.15 80 1224 1999-01-04
PD03 CS03 EP04 10 0 490 4900 1999-01-04
PD04 CS04 EP05 17.6 0 240 4224 2012-08-11
PD05 CS03 EP04 17 0 160 2720 2012-08-11
PD01 CS04 EP05 14.4 0 200 2880 1999-01-08
PD03 CS02 EP02 8 0.1 200 1440 1999-01-08
PD01 CS02 EP01 18 0.2 800 11520 1999-01-10
PD01 CS04 EP02 14.4 0.05 500 6840 2012-08-11
PD03 CS01 EP04 8 0 300 2400 2012-08-11
PD04 CS05 EP04 22 0.05 500 10450 1999-01-11
PD04 CS03 EP04 22 0 30 660 1999-01-12
PD02 CS05 EP04 19 0.1 200 3420 1999-01-13
PD01 CS03 EP04 14.4 0.25 200 2160 1999-01-14
PD02 CS01 EP04 15.2 0 100 1520 1999-01-14
PD02 CS05 EP04 15.2 0 400 6080 1999-01-14
PD05 CS04 EP03 21.35 0 50 1067.5 1999-01-16
PD02 CS03 EP01 15.2 0.1 200 2736 1999-01-17
PD03 CS04 EP04 10 0 40 400 1999-01-17
PD01 CS02 EP05 14.4 0 100 1440 1999-01-20
PD01 CS03 EP01 14.4 0 240 3456 1999-01-21
PD05 CS05 EP02 21.35 0 60 1281 1999-01-22
PD03 CS02 EP05 8 0.25 700 4200 1999-01-26
PD03 CS02 EP03 10 0.1 200 1800 1999-01-28
PD04 CS03 EP01 22 0.2 200 3520 1999-01-30
PD01 CS05 EP05 18 0 200 3600 1999-02-01
PD05 CS02 EP03 17 0 150 2550 1999-02-01`.split('\n');

const kinds = ['l', 'l', 'l', 'price', '', '', '', 'l'];
document.getElementById('orders').innerHTML = orders.map((line, i) =>
  `<tr><th>${i + 1}</th>${line.split(' ').map((v, c) => `<td class="${kinds[c]}">${v}</td>`).join('')}</tr>`
).join('');

const filled = { B3: '产品', C3: '客户', D3: '雇员', E3: '单价', A4: '&lt;表名&gt;' };
let html = '';
for (let r = 1; r <= 24; r++) {
  html += `<tr><th${r === 3 ? ' class="picked"' : ''}>${r}</th>`;
  for (const c of 'ABCDEFGHI') {
    const key = c + r;
    html += `<td${key === 'F3' ? ' class="cur"' : ''}>${filled[key] || ''}</td>`;
  }
  html += '</tr>';
}
document.getElementById('cells').innerHTML = html;
```
